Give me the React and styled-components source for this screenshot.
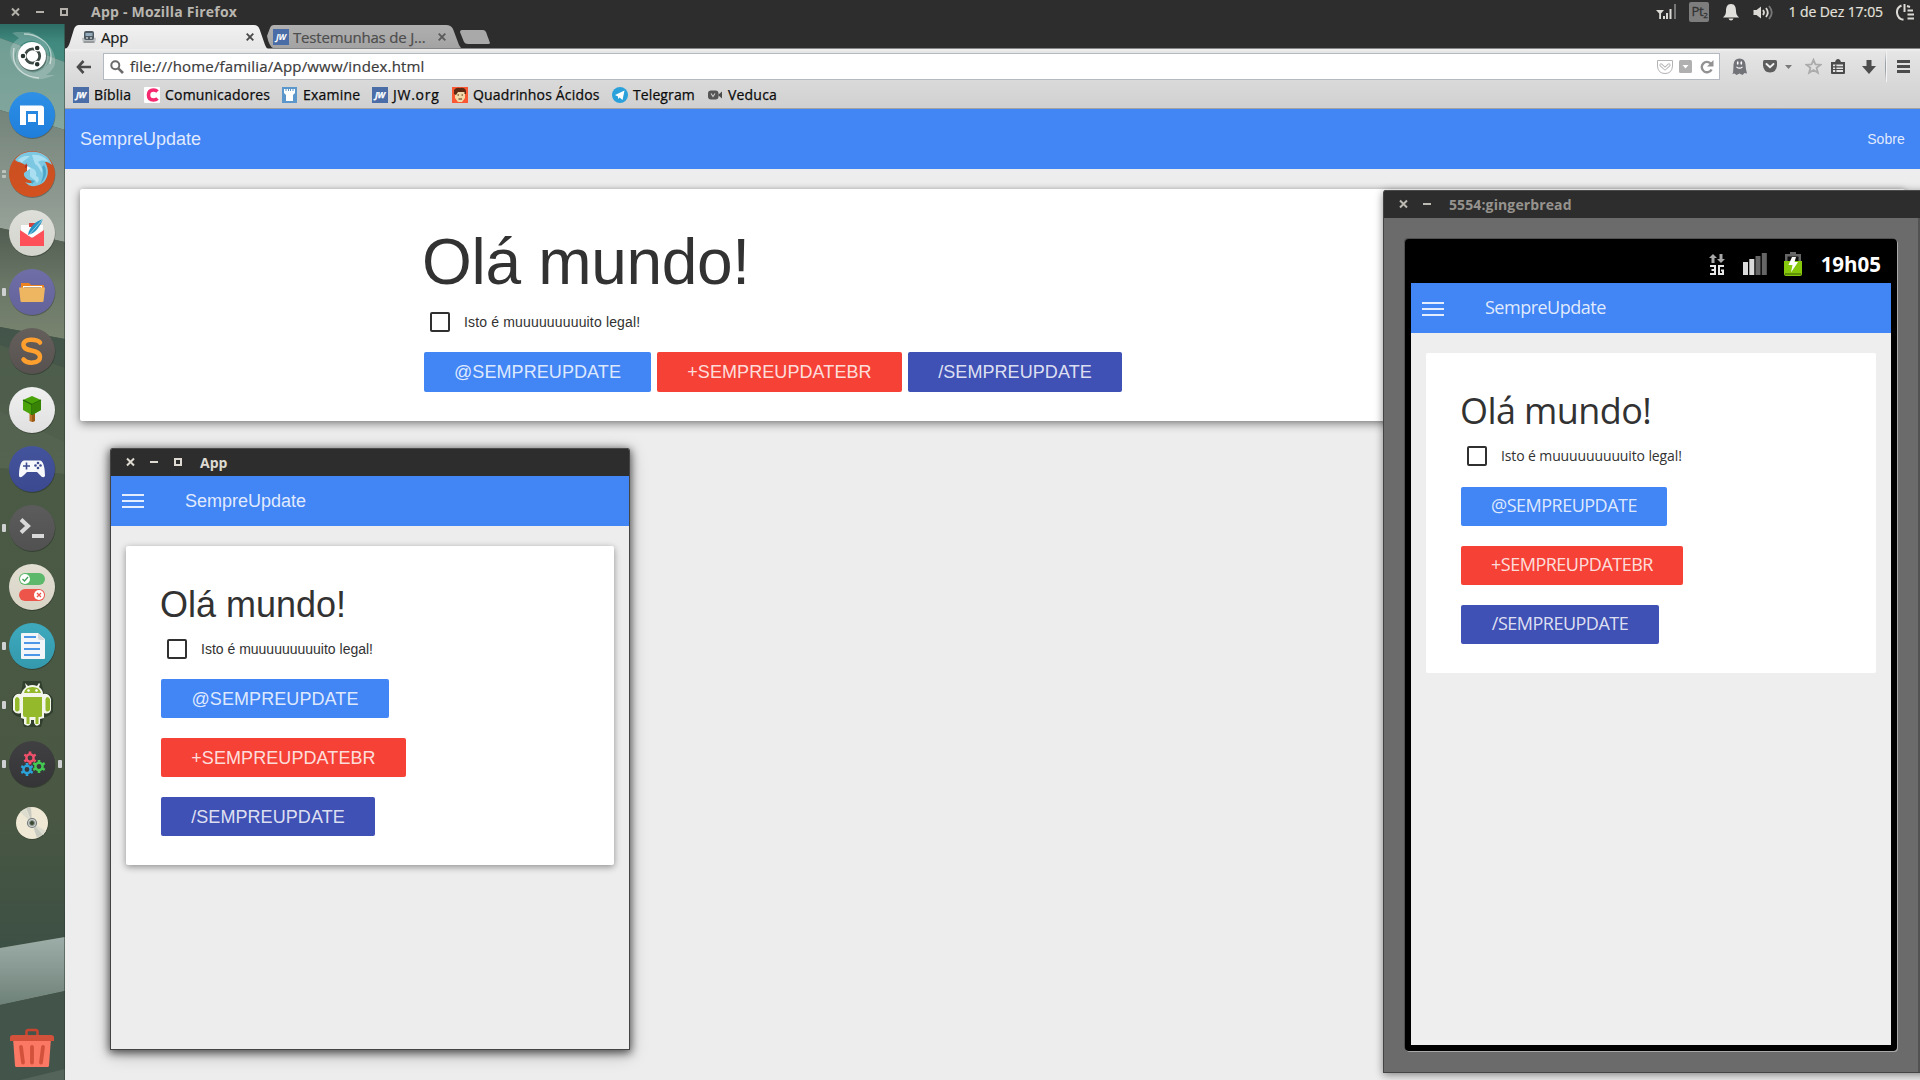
import React from "react";
import styled, { createGlobalStyle, css } from "styled-components";

const HELV = '"Liberation Sans", Arial, sans-serif';
const SYS = '"Open Sans", "Noto Sans", sans-serif';

const Global = createGlobalStyle`
  * { box-sizing: border-box; }
  html, body { margin: 0; width: 1920px; height: 1080px; overflow: hidden; background: #2d2d2d; }
  svg { display: block; flex: none; }
`;

/* ---------- desktop ---------- */
const Desktop = styled.div`
  position: relative;
  width: 1920px;
  height: 1080px;
  overflow: hidden;
  display: grid;
  grid-template: 24px 1fr / 65px 1fr;
  font-family: ${SYS};
  white-space: nowrap;
`;
const TopPanel = styled.header`
  grid-column: 1 / -1;
  display: flex;
  align-items: center;
  justify-content: space-between;
  padding: 0 6px 0 10px;
  background: #2d2d2d;
  color: #dfdbd2;
`;
const PanelGroup = styled.div`
  display: flex;
  align-items: center;
  height: 24px;
`;
const PanelTitle = styled.span`
  margin-left: 22px;
  font-weight: 700;
  font-size: 14px;
  line-height: 22px;
  letter-spacing: 0.22px;
  color: #b9b6b0;
`;
const Clock = styled.span`
  margin: 0 13px 0 14px;
  font-size: 14px;
  line-height: 22px;
  padding-bottom: 1px;
  letter-spacing: -0.08px;
  color: #e4e1dc;
  -webkit-text-stroke: 0.2px;
`;
const Gap = styled.i`
  width: ${(p) => p.$w}px;
`;
const Layout = styled.span`
  width: 20px;
  height: 20px;
  border-radius: 2px;
  background: #7d7d7d;
  color: #333;
  font-size: 13px;
  line-height: 19px;
  text-align: center;
  letter-spacing: -0.3px;
  -webkit-text-stroke: 0.3px;
  sub { font-size: 8px; line-height: 0; vertical-align: -2px; }
`;

/* ---------- dock ---------- */
const Dock = styled.nav`
  position: relative;
  display: flex;
  flex-direction: column;
  padding: 2px 0 11px;
  overflow: hidden;
  background: #4a5846;
`;
const Wallpaper = styled.svg`
  position: absolute;
  inset: 0;
`;
const DockItem = styled.div`
  position: relative;
  display: grid;
  grid-template-columns: 6px 1fr 7px;
  align-items: center;
  height: 59px;
  margin-top: ${(p) => (p.$last ? "auto" : 0)};
  ${(p) => p.$last && css`height: 42px;`}
  & > svg { justify-self: center; grid-column: 2; margin-left: -0.5px; }
`;
const Pip = styled.i`
  grid-row: 1;
  grid-column: ${(p) => (p.$right ? 3 : 1)};
  justify-self: ${(p) => (p.$right ? "start" : "end")};
  width: 4px;
  height: 8px;
  border-radius: 1px;
  background: ${(p) =>
    p.$double
      ? "linear-gradient(#bcc3be 0 3px, transparent 3px 5px, #bcc3be 5px 8px)"
      : "#cfd0d2"};
`;

/* ---------- browser ---------- */
const Browser = styled.main`
  display: flex;
  flex-direction: column;
  min-width: 0;
  background: #ededed;
`;
const TabStrip = styled.div`
  display: flex;
  height: 25px;
  padding-top: 1px;
  background: #2d2d2d;
  border-bottom: 1px solid #858585;
`;
const Tab = styled.div`
  display: flex;
  align-items: center;
  width: ${(p) => p.$w}px;
  height: ${(p) => (p.$active ? 24 : 23)}px;
  margin-left: ${(p) => (p.$active ? 0 : -3)}px;
  padding: 0 ${(p) => (p.$active ? 14 : 15)}px 0 ${(p) => (p.$active ? 17 : 8)}px;
  background: ${(p) => (p.$active ? "linear-gradient(#f1f1f1, #e6e6e6)" : "linear-gradient(#b0b0b0, #a3a3a3)")};
  clip-path: ${(p) =>
    p.$active
      ? "path('M0 24 C3 23 4 20 5 17 L9 4 Q10.500 0 14 0 H189 Q193 0 194.500 4 L199 17 C200 20 201 23 203 24 Z')"
      : "path('M2 11 L5 3 Q6 0 9 0 H181 Q186 0 188 4 L194 20 L196 23 H8 Q4 21 2 11 Z')"};
  z-index: ${(p) => (p.$active ? 2 : 1)};
`;
const TabLabel = styled.span`
  flex: 1;
  margin-left: ${(p) => (p.$muted ? 4 : 5)}px;
  font-size: 15px;
  line-height: 22px;
  letter-spacing: -0.18px;
  color: ${(p) => (p.$muted ? "#4d4d4d" : "#161616")};
  -webkit-text-stroke: 0.2px;
`;
const NewTab = styled.i`
  width: 31px;
  height: 14px;
  margin: 5px 0 0 -2px;
  background: #a9a9a9;
  clip-path: path("M3 0 H24 Q26 0 27 2 L31 13 Q31 14 29 14 H9 Q6 14 5 12 L1 2 Q1 0 3 0 Z");
`;
const Chrome = styled.div`
  height: 60px;
  border-bottom: 1px solid #a3a3a3;
  background: linear-gradient(#f0f0f0 0, #e5e5e5 3px, #dadada 30px, #d0d0d0 60px);
`;
const NavBar = styled.div`
  display: flex;
  align-items: center;
  height: 33px;
  padding: 4px 9px 2px 11px;
`;
const UrlBox = styled.div`
  display: flex;
  align-items: center;
  width: 1617px;
  height: 27px;
  margin-left: 12px;
  padding: 0 5px 0 6px;
  border: 1px solid #b4b9c1;
  background: #fff;
`;
const Url = styled.span`
  flex: 1;
  margin-left: 6px;
  padding-bottom: 2px;
  font-size: 15px;
  line-height: 24px;
  letter-spacing: 0.16px;
  color: #3b3b3b;
  -webkit-text-stroke: 0.2px;
`;
const Divider = styled.i`
  width: 1px;
  height: 31px;
  margin: 0 11px 0 9px;
  background: linear-gradient(transparent, #9aa0a8 40%, #9aa0a8 60%, transparent);
  box-shadow: 1px 0 #f3f3f3;
`;
const Bookmarks = styled.div`
  display: flex;
  height: 25px;
  padding-left: 8px;
`;
const Bookmark = styled.div`
  display: flex;
  align-items: center;
  gap: ${(p) => p.$gap ?? 5}px;
  width: ${(p) => p.$w}px;
  font-size: 14px;
  line-height: 24px;
  color: #0b0b0b;
  letter-spacing: ${(p) => p.$ls ?? 0.2}px;
  -webkit-text-stroke: 0.25px;
`;
const Jw = styled.span`
  flex: none;
  width: 16px;
  height: 16px;
  background: #4a6da7;
  color: #fff;
  font: italic 700 8.5px/16px ${SYS};
  text-align: center;
  letter-spacing: -0.2px;
`;

/* ---------- SempreUpdate page ---------- */
const AppBar = styled.div`
  flex: none;
  display: flex;
  align-items: center;
  justify-content: space-between;
  height: ${(p) => (p.$wide ? 60 : 50)}px;
  padding: ${(p) => (p.$wide ? "0 15px" : "0 0 0 11px")};
  background: #4285f5;
  color: rgba(255, 255, 255, 0.85);
  ${(p) => !p.$wide && css`justify-content: flex-start;`}
`;
const Brand = styled.span`
  font-size: 18px;
  line-height: 20px;
  padding-bottom: ${(p) => p.$lift ?? 0}px;
  letter-spacing: ${(p) => p.$ls ?? 0}px;
`;
const About = styled.span`
  font-size: 14px;
  line-height: 20px;
  letter-spacing: 0.1px;
`;
const Burger = styled.i`
  width: 22px;
  height: 14px;
  margin: ${(p) => p.$m};
  border-top: 2px solid #e3edfe;
  border-bottom: 2px solid #e3edfe;
  background: linear-gradient(transparent 4px, #e3edfe 4px 6px, transparent 6px);
`;
const Card = styled.section`
  display: flex;
  flex-direction: column;
  align-items: flex-start;
  height: ${(p) => p.$h}px;
  margin: ${(p) => p.$m};
  padding: ${(p) => p.$p};
  border-radius: 2px;
  background: #fff;
  color: #323232;
  box-shadow: ${(p) => p.$shadow ?? "none"};
`;
const Heading = styled.h1`
  margin: 0;
  font-size: ${(p) => (p.$big ? 64 : 36)}px;
  line-height: ${(p) => (p.$big ? 64 : 36)}px;
  font-weight: 400;
  letter-spacing: ${(p) => p.$ls ?? 0}px;
  text-indent: ${(p) => p.$shift ?? 0}px;
`;
const CheckRow = styled.label`
  display: flex;
  align-items: center;
  gap: 14px;
  height: 20px;
  margin: ${(p) => p.$mt}px 0 0 6px;
  font-size: 14px;
  line-height: 20px;
  letter-spacing: ${(p) => p.$ls ?? 0}px;
`;
const Box = styled.i`
  width: 20px;
  height: 20px;
  border: 2px solid #303030;
  border-radius: 2px;
`;
const Buttons = styled.div`
  display: flex;
  flex-direction: ${(p) => (p.$row ? "row" : "column")};
  align-items: flex-start;
  gap: ${(p) => (p.$row ? 6 : 20)}px;
  margin-top: ${(p) => p.$mt}px;
`;
const Button = styled.button`
  width: ${(p) => p.$w}px;
  height: ${(p) => p.$h}px;
  padding: 0;
  border: 0;
  border-radius: 2px;
  background: ${(p) => p.$bg};
  color: rgba(255, 255, 255, 0.84);
  font: inherit;
  font-size: 18px;
  letter-spacing: ${(p) => p.$ls}px;
  line-height: ${(p) => p.$lh}px;
  display: flex;
  justify-content: center;
  align-items: flex-start;
`;

/* ---------- floating windows ---------- */
const Window = styled.div`
  position: absolute;
  left: ${(p) => p.$x}px;
  top: ${(p) => p.$y}px;
  width: ${(p) => p.$w}px;
  height: ${(p) => p.$h}px;
  display: flex;
  flex-direction: column;
  border: 1px solid #444;
  border-top: 0;
  border-radius: 3px 3px 0 0;
  background: ${(p) => p.$bg};
  box-shadow: ${(p) => p.$shadow};
  font-family: ${(p) => p.$font};
  overflow: hidden;
`;
const TitleBar = styled.div`
  flex: none;
  display: flex;
  align-items: center;
  height: 28px;
  padding: 0 0 2px 14px;
  border-top: 1px solid #4b4b4b;
  background: #2d2d2d;
  font: 700 14px/22px ${SYS};
  color: ${(p) => p.$color};
  letter-spacing: ${(p) => p.$ls ?? 0}px;
`;
const WinLabel = styled.span`
  margin: 2px 0 0 17px;
`;
const Phone = styled.div`
  display: flex;
  flex-direction: column;
  width: 492px;
  height: 812px;
  margin: 21px 0 0 21px;
  padding: 0 6px 6px 6px;
  border-radius: 4px;
  background: #000;
  box-shadow: 1px 1px 0 #a9a9a9, -1px -1px 0 #505050;
`;
const StatusBar = styled.div`
  flex: none;
  display: flex;
  align-items: center;
  justify-content: flex-end;
  height: 44px;
  padding: 6px 10px 0 0;
`;
const PhoneClock = styled.span`
  margin-left: 19px;
  font-size: 20.5px;
  line-height: 24px;
  font-weight: 700;
  color: #fff;
`;
const PhonePage = styled.div`
  flex: 1;
  background: #eee;
`;

/* ---------- small drawings ---------- */
const WinButtons = ({ color, max = true, top }) => {
  const w = max ? (top ? 59 : 58) : 34;
  return (
    <svg width={w} height="10" viewBox={`0 0 ${w} 10`} fill="none" stroke={color} strokeWidth="2">
      <path d="M2 1.500 L9 8.500 M9 1.500 L2 8.500" />
      <path d={top ? "M26 5 H34" : "M25 5 H33"} />
      {max && <rect x={top ? 51 : 50} y="2" width="6" height="6" />}
    </svg>
  );
};

const TrayIcons = () => (
  <>
    <svg width="21" height="17" viewBox="0 0 21 17" fill="#dcdad5">
      <path d="M0 6 H8 L5 9.500 V15 H3.200 V9.500 Z M7 12 H9 V15 H7 Z M10 9 H12 V15 H10 Z M13.500 5 H15.500 V15 H13.500 Z" />
      <path d="M18 0 H20 V15 H18 Z" fill="#777" />
    </svg>
    <Gap $w={12} />
    <Layout>Pt<sub>2</sub></Layout>
    <Gap $w={14} />
    <svg width="16" height="17" viewBox="0 0 16 17" fill="#e2e0dc">
      <path d="M8 0 C4 0 3 3.500 3 7 C3 10 2 11.500 0 13.500 H16 C14 11.500 13 10 13 7 C13 3.500 12 0 8 0 Z M5.500 14.500 H10.500 Q10 16.500 8 16.500 Q6 16.500 5.500 14.500 Z" />
    </svg>
    <Gap $w={14} />
    <svg width="21" height="15" viewBox="0 0 21 15" fill="none" stroke="#dcdad5" strokeWidth="1.800">
      <path d="M0.500 5 H3.500 L8 1.500 V13.500 L3.500 10 H0.500 Z" fill="#dcdad5" stroke="none" />
      <path d="M10 5 Q12 7.500 10 10 M13 3 Q16.500 7.500 13 12" />
      <path d="M16 1 Q21.500 7.500 16 14" stroke="#777" />
    </svg>
  </>
);

const Power = () => (
  <svg width="18" height="17" viewBox="0 0 18 17" fill="none" stroke="#dcdad5" strokeWidth="2">
    <path d="M5.500 1.500 A7.500 7.500 0 0 0 7.500 15.800 M8.500 0 V8 M11 2 L14 3 M11.500 6.500 H17 M11.500 10.500 H18 M11.500 14.500 H18" />
  </svg>
);

const Close = ({ color }) => (
  <svg width="8" height="8" viewBox="0 0 8 8" stroke={color} strokeWidth="1.900"><path d="M0.700 0.700 L7.300 7.300 M7.300 0.700 L0.700 7.300" /></svg>
);

const Circle = ({ id, from, to, children }) => (
  <svg width="48" height="48" viewBox="-1 -1 48 48">
    <defs><linearGradient id={id} x2="0" y2="1"><stop stopColor={from} /><stop offset="1" stopColor={to} /></linearGradient></defs>
    <circle cx="23.400" cy="24" r="23" fill="#000" opacity=".28" />
    <circle cx="23" cy="23" r="23" fill={`url(#${id})`} />
    {children}
  </svg>
);

const Gear = ({ x, y, c }) => (
  <g transform={`translate(${x} ${y})`} stroke={c} fill="none">
    <circle r="3.600" strokeWidth="2.400" />
    <path strokeWidth="2.600" d="M0 -4 V-6.500 M0 4 V6.500 M3.500 -2 L5.700 -3.300 M-3.500 2 L-5.700 3.300 M-3.500 -2 L-5.700 -3.300 M3.500 2 L5.700 3.300" />
  </g>
);

const DOCK = [
  { k: "ubuntu", icon: (
    <svg width="48" height="48" viewBox="-1 -1 48 48">
      <g fill="#fff" opacity=".2">
        <path d="M3 0 Q24 -6 36 10 Q46 24 31 42 Q43 24 32 12 Q20 2 8 16 Q3 24 7 34 Q-1 24 2 14 Q5 8 10 5 Z" />
        <path d="M46 42 Q24 52 11 38 Q1 24 14 5 Q5 24 15 35 Q26 46 39 31 Q44 24 40 12 Q49 24 45 34 Q42 39 37 42 Z" />
      </g>
      <path d="M5 15 Q2 32 14 40 Q20 44 30 45 M41 31 Q45 14 32 6 Q25 1 15 1" fill="none" stroke="#fff" strokeWidth="1.400" opacity=".55" />
      <circle cx="23.500" cy="24" r="14.500" fill="#000" opacity=".3" />
      <circle cx="23" cy="23" r="14" fill="#fff" />
      <circle cx="23.500" cy="23" r="7.200" fill="none" stroke="#3d4a45" strokeWidth="2.800" />
      <g fill="#26332e" stroke="#fff" strokeWidth="1.200"><circle cx="14" cy="23" r="2.900" /><circle cx="28.200" cy="15" r="2.900" /><circle cx="28.200" cy="31.200" r="2.900" /></g>
    </svg>) },
  { k: "maxthon", icon: (
    <Circle id="mx" from="#2f90e6" to="#1e7edb">
      <path d="M11 33 V13.500 H32 Q35 13.500 35 16.500 V33 H29 V19 H17 V33 Z M19 22 H27 V30 H19 Z" fill="#fff" />
    </Circle>) },
  { k: "firefox", pip: "double", icon: (
    <Circle id="ff" from="#c94f22" to="#d2511f">
      <path d="M6 9 C12 1 20 0 27 1 C35 2 41 7 43 14 C39 11 38 11 36 11 C40 18 40 25 35 31 C29 36 21 37 16 31 C20 33 24 32 25 30 C19 30 14 26 15 22 L19 19 L18 14 C14 14 13 11 9 11 Z" fill="#7cc8e2" />
      <path d="M9 9 C14 4 18 5 21 5 C18 8 15 9 13 12 Z M23 4 C30 3 36 6 40 11 C35 9 32 9 29 11 C32 14 34 18 33 22 C30 18 30 15 26 13 Z M21 17 C26 17 28 21 27 25 C30 26 31 29 28 32 C26 28 23 28 21 25 Z" fill="#a9dff0" />
      <path d="M35 14 C39 20 37 28 31 33 C35 26 35 20 33 16 Z M22 29 L26 30 L23 33 Z" fill="#4ba5c8" />
      <path d="M17 12 L19 16 L16 17 Z" fill="#b22d20" /><path d="M18 15 L22 17 L18 20 Z" fill="#eef8fb" />
    </Circle>) },
  { k: "mail", icon: (
    <Circle id="ml" from="#dedfd9" to="#d3d4cc">
      <path d="M12 15 H34 V27 H12 Z" fill="#fbfbfb" /><path d="M20 13 H26 V17 H20 Z" fill="#d7433f" />
      <path d="M11 20 L23 28 L35 20 V36 H11 Z" fill="#fd5059" />
      <path d="M34 9 C27 11 20 17 19 25 C27 23 31 16 34 9 Z" fill="#2595c5" /><path d="M34 9 L19 26" stroke="#eee" strokeWidth=".6" />
    </Circle>) },
  { k: "files", pip: "one", icon: (
    <Circle id="fl" from="#706ea6" to="#64629a">
      <path d="M12 14 H20 L22 16 H35 V22 H12 Z" fill="#ea821f" /><path d="M14 17 H33 V22 H14 Z" fill="#fff" /><path d="M15 18.500 H32" stroke="#999" />
      <path d="M10 18.500 H36 L34.500 32 Q34.500 33 33.500 33 H12.500 Q11.500 33 11.500 32 Z" fill="#efb662" />
    </Circle>) },
  { k: "sublime", icon: (
    <Circle id="sb" from="#655f5c" to="#575250">
      <path d="M31 14.500 C28 11 14 10 14.500 17 C15 25 31 20 31 29 C31 36 18 36 14.500 31.500" fill="none" stroke="#ff9f2e" strokeWidth="4.500" strokeLinecap="round" />
    </Circle>) },
  { k: "tree", icon: (
    <Circle id="tr" from="#f0f0f0" to="#e0e0e0">
      <path d="M20.500 26 H26 V34 L23 35 L20.500 34 Z" fill="#b9752a" /><path d="M23 26 H26 V34 L23 35 Z" fill="#9a5a15" />
      <path d="M23 9 L32 13 V23 L23 28 L14 23 V13 Z" fill="#4aa409" /><path d="M14 13 L23 17.500 L32 13 M23 17.500 V28" stroke="#23610a" strokeWidth="1.300" fill="none" /><path d="M23 17.500 L32 13 V23 L23 28 Z" fill="#388205" />
    </Circle>) },
  { k: "gamepad", icon: (
    <Circle id="gp" from="#44549c" to="#3b4990">
      <path d="M15 14.500 H31 C35 15 36 24 36 30 Q34 33 31 29 L28 26 H18 L15 29 Q11 33 10 30 C10 24 11 15 15 14.500 Z" fill="#f7f8fb" />
      <path d="M17.500 16.500 V23.500 M14 20 H21" stroke="#3c4a90" strokeWidth="1.600" />
      <g fill="#3c4a90"><circle cx="29" cy="17" r="1.300" /><circle cx="29" cy="22" r="1.300" /><circle cx="26.500" cy="19.500" r="1.300" /><circle cx="31.500" cy="19.500" r="1.300" /></g>
    </Circle>) },
  { k: "terminal", pip: "one", icon: (
    <Circle id="tm" from="#5c5c5c" to="#515151">
      <path d="M12 14.500 L19 21 L12 27.500" fill="none" stroke="#d9d9d9" strokeWidth="4" /><path d="M23 31 H35" stroke="#d9d9d9" strokeWidth="4" />
    </Circle>) },
  { k: "tweak", icon: (
    <Circle id="tw" from="#e2dfd2" to="#d8d5c7">
      <rect x="10" y="9" width="26" height="12" rx="6" fill="#5cb86a" /><circle cx="16" cy="15" r="5" fill="#fff" /><path d="M13.500 15 L15.500 17 L19 13" stroke="#3f9f58" strokeWidth="1.300" fill="none" />
      <rect x="10" y="25" width="26" height="12" rx="6" fill="#ee554a" /><circle cx="30" cy="31" r="5" fill="#fff" /><path d="M28 29 L32 33 M32 29 L28 33" stroke="#ee554a" strokeWidth="1.300" />
    </Circle>) },
  { k: "writer", pip: "one", icon: (
    <Circle id="wr" from="#3ea9bd" to="#3499ad">
      <path d="M12 11 Q12 10 13 10 H29 L36 16 V35 Q36 36 35 36 H13 Q12 36 12 35 Z" fill="#f3f6f9" /><path d="M29 10 L36 17 H31 Q29 17 29 15 Z" fill="#d4d8dc" />
      <path d="M15 14 H27 M15 20 H31 M15 26 H31 M15 32 H31" stroke="#4b96e6" strokeWidth="2" />
    </Circle>) },
  { k: "android", pip: "one", icon: (
    <svg width="48" height="48" viewBox="-1 -1 48 48">
      <path d="M14 -1 L32 -1 L35 11 Q42 11 44 17 V30 Q40 35 35 35 L32 45 H15 L12 35 Q6 35 3 30 V17 Q4 11 12 11 Z" fill="#22301f" opacity=".6" />
      <path d="M16 1 L19 4 Q23 2 28 4 L30 1 L31 2 L30 5 Q34 8 34 12 Q40 11 42 17 V28 Q40 33 35 31 V36 L31 37 V42 Q27 46 25 41 V38 H22 V41 Q20 46 15 42 V37 L12 36 V31 Q7 33 4 28 V17 Q6 11 12 12 Q13 8 17 5 Z" fill="#f4f6ec" />
      <path d="M15 11 Q16 5 23.500 5 Q31 5 32 11 Z M14 15 H33 V34 Q33 35 31 35 H29.500 V42 H26.500 V35 H20.500 V42 H17.500 V35 H16 Q14 35 14 33 Z M6 17 Q8 13 10.500 17 V28 Q8 31 6 28 Z M36.500 17 Q38 13 41 17 V28 Q38 31 36.500 28 Z" fill="#94b92b" />
      <circle cx="19.500" cy="8.500" r="1.300" fill="#fff" /><circle cx="27.500" cy="8.500" r="1.300" fill="#fff" />
    </svg>) },
  { k: "gears", pip: "both", icon: (
    <Circle id="gr" from="#403f41" to="#353436">
      <Gear x={21} y={17} c="#f0506b" /><Gear x={30} y={25.500} c="#43cb53" /><Gear x={18} y={28.500} c="#2ba2d8" />
    </Circle>) },
  { k: "disc", icon: (
    <svg width="48" height="48" viewBox="-1 -1 48 48">
      <circle cx="23.300" cy="23.500" r="16.300" fill="#000" opacity=".2" /><circle cx="23" cy="23" r="16" fill="#efe8d5" />
      <path d="M23 23 L17 8 L22 7 Z M23 23 L28 38 L35 34 Z" fill="#c9cbc1" /><path d="M23 23 L11 12 L16.500 8.500 Z M23 23 L37 31 L34 35 Z" fill="#dcdccf" />
      <circle cx="23" cy="23" r="4.500" fill="#cfd2cb" stroke="#737d80" strokeWidth="1.200" /><circle cx="23" cy="23" r="2.500" fill="#394632" stroke="#8d9590" />
    </svg>) },
];

const Trash = () => (
  <svg width="44" height="40" viewBox="0 0 44 40">
    <path d="M16.500 8 V4 Q16.500 2 18.500 2 H25.500 Q27.500 2 27.500 4 V8" fill="none" stroke="#c9452f" strokeWidth="2.500" />
    <path d="M3 10 H41 L39 37.500 Q39 39 37.500 39 H6.500 Q5 39 5 37.500 Z" fill="#fb7865" />
    <path d="M0 9.500 Q0 7 3 7 H41 Q44 7 44 9.500 V13 H0 Z" fill="#d2513b" />
    <path d="M11 19 L13 34.500 M22 19 V34.500 M33 19 L31 34.500" stroke="#d2513b" strokeWidth="3.800" strokeLinecap="round" />
  </svg>
);

const Paper = () => (
  <Wallpaper width="65" height="1056" viewBox="0 24 65 1056">
    <defs>
      <linearGradient id="w1" x2="0" y2="1"><stop stopColor="#2d6e66" /><stop offset=".5" stopColor="#418a7f" /><stop offset="1" stopColor="#468c80" /></linearGradient>
      <linearGradient id="w2" x2="0" y2="1"><stop stopColor="#6f9d93" /><stop offset="1" stopColor="#85a79e" /></linearGradient>
      <linearGradient id="w3" x2="0" y2="1"><stop stopColor="#74847a" /><stop offset="1" stopColor="#9aa49b" /></linearGradient>
      <linearGradient id="w4" x2="0" y2="1"><stop stopColor="#505d50" /><stop offset=".5" stopColor="#6a7767" /><stop offset="1" stopColor="#78846f" /></linearGradient>
      <linearGradient id="w5" x2="0" y2="1"><stop stopColor="#43544a" /><stop offset="1" stopColor="#4d5d48" /></linearGradient>
      <linearGradient id="w6" x2="0" y2="1"><stop stopColor="#9daea8" /><stop offset="1" stopColor="#6e8178" /></linearGradient>
      <linearGradient id="w7" x2="0" y2="1"><stop stopColor="#4a5a45" /><stop offset=".7" stopColor="#4a5843" /><stop offset="1" stopColor="#3d5044" /></linearGradient>
    </defs>
    <path d="M0 24 H65 V62 L0 38 Z" fill="url(#w1)" />
    <path d="M0 38 L65 62 V130 L0 110 Z" fill="url(#w2)" />
    <path d="M0 110 L65 130 V242 L0 228 Z" fill="url(#w3)" />
    <path d="M0 228 L65 242 V339 L0 327 Z" fill="url(#w4)" />
    <path d="M0 327 L65 339 V480 H0 Z" fill="url(#w5)" />
    <path d="M0 345 L65 368 V442 L0 411 Z" fill="#55654f" opacity=".55" />
    <path d="M0 411 L65 442 V474 L0 468 Z" fill="#5a6955" opacity=".6" />
    <path d="M0 468 L65 474 V937 L0 948 Z" fill="url(#w7)" />
    <path d="M0 948 L65 937 V991 L0 1005 Z" fill="url(#w6)" />
    <path d="M0 1005 L65 991 V1080 H0 Z" fill="#43544a" />
    <path d="M20 1080 L65 1069 V1080 Z" fill="#54645a" />
    <path d="M64.500 24 V1080" stroke="#2e3a33" opacity=".5" />
  </Wallpaper>
);

const Star = () => (
  <svg width="17" height="17" viewBox="0 0 17 17" fill="none" stroke="#ababab" strokeWidth="1.800">
    <path d="M8.500 1.800 L10.400 6.400 L15.500 6.700 L11.600 9.900 L12.900 14.800 L8.500 12.100 L4.100 14.800 L5.400 9.900 L1.500 6.700 L6.600 6.400 Z" />
  </svg>
);

const LINKS = [
  { label: "@SEMPREUPDATE", bg: "#4285f5" },
  { label: "+SEMPREUPDATEBR", bg: "#f64236" },
  { label: "/SEMPREUPDATE", bg: "#3f51b5" },
];
const SocialButtons = ({ widths, h, lh = h, ls = 0.08, ...rest }) => (
  <Buttons {...rest}>
    {LINKS.map((l, i) => <Button key={l.label} $bg={l.bg} $w={widths[i]} $h={h} $lh={lh} $ls={ls}>{l.label}</Button>)}
  </Buttons>
);

export default function App() {
  return (
    <Desktop>
      <Global />
      <TopPanel>
        <PanelGroup>
          <WinButtons color="#b4b1ab" top />
          <PanelTitle>App - Mozilla Firefox</PanelTitle>
        </PanelGroup>
        <PanelGroup>
          <TrayIcons />
          <Clock>1 de Dez 17:05</Clock>
          <Power />
        </PanelGroup>
      </TopPanel>

      <Dock>
        <Paper />
        {DOCK.map((d) => (
          <DockItem key={d.k}>
            {d.pip && <Pip $double={d.pip === "double"} />}
            {d.icon}
            {d.pip === "both" && <Pip $right />}
          </DockItem>
        ))}
        <DockItem $last><Trash /></DockItem>
      </Dock>

      <Browser>
        <TabStrip>
          <Tab $active $w={203}>
            <svg width="14" height="14" viewBox="0 0 14 14">
              <path d="M0 8 Q7 6 14 8 L13 13 H1 Z" fill="#b9bec1" />
              <rect x="2" y="1" width="10" height="9" rx="2" fill="#4e5a62" /><rect x="3.500" y="3" width="7" height="3" fill="#93abba" /><path d="M4 8 H6 M8 8 H10" stroke="#fff" /><path d="M2 12 H12" stroke="#777" />
            </svg>
            <TabLabel>App</TabLabel>
            <Close color="#4a4a4a" />
          </Tab>
          <Tab $w={196}>
            <Jw>JW</Jw>
            <TabLabel $muted>Testemunhas de J…</TabLabel>
            <Close color="#5b5b5b" />
          </Tab>
          <NewTab />
        </TabStrip>
        <Chrome>
          <NavBar>
            <svg width="15" height="14" viewBox="0 0 15 14" fill="none" stroke="#4b4b4b" strokeWidth="2.600"><path d="M7.500 1 L2 7 L7.500 13 M2 7 H15" /></svg>
            <UrlBox>
              <svg width="14" height="14" viewBox="0 0 14 14" fill="none" stroke="#6b6b6b" strokeWidth="2"><circle cx="5.300" cy="5.300" r="4" /><path d="M8.300 8.300 L13 13" strokeWidth="2.600" /></svg>
              <Url>file:///home/familia/App/www/index.html</Url>
              <svg width="16" height="14" viewBox="0 0 16 14" fill="none" stroke="#b3b3b3"><path d="M0.500 0.500 H15.500 V6 Q15 13.500 8 13.500 Q1 13.500 0.500 6 Z" /><path d="M4 5 L8 8.700 L12 5" strokeWidth="3.200" strokeLinecap="round" strokeLinejoin="round" /><path d="M4 5 L8 8.700 L12 5" stroke="#fff" strokeWidth="1.400" strokeLinecap="round" /></svg>
              <Gap $w={6} />
              <svg width="13" height="13" viewBox="0 0 13 13"><rect width="13" height="13" rx="1.500" fill="#b0b0b0" /><path d="M3.500 5 H9.500 L6.500 8.500 Z" fill="#fff" /></svg>
              <Gap $w={8} />
              <svg width="14" height="14" viewBox="0 0 14 14" fill="none" stroke="#929292" strokeWidth="2.400"><path d="M11 3.800 A5.200 5.200 0 1 0 11.600 9.500" /><path d="M13.500 0 V6.500 H7 Z" fill="#929292" stroke="none" /></svg>
            </UrlBox>
            <Gap $w={12} />
            <svg width="15" height="17" viewBox="0 0 15 17"><path d="M1 15 Q1.500 10 1.500 6.500 Q2 0.500 7.500 0.500 Q13 0.500 13.500 6.500 Q13.500 10 15 15.500 L12.500 15 L10.500 17 L7.500 15.500 L4.500 17 L2.500 15.500 L0 16 Z" fill="#727279" /><ellipse cx="5.700" cy="5" rx=".9" ry="1.700" fill="#fff" /><ellipse cx="9.300" cy="5" rx=".9" ry="1.700" fill="#fff" /><path d="M4.500 8.800 Q7.500 11.500 10.500 8.800" stroke="#fff" strokeWidth="1.100" fill="none" /></svg>
            <Gap $w={16} />
            <svg width="14" height="13" viewBox="0 0 14 13"><path d="M0 1.500 Q0 0 1.500 0 H12.500 Q14 0 14 1.500 V5.500 Q13.500 12 7 12.500 Q0.500 12 0 5.500 Z" fill="#5d5d5d" /><path d="M3.500 4 L7 7.300 L10.500 4" stroke="#f2f2f2" strokeWidth="1.900" fill="none" strokeLinecap="round" /></svg>
            <Gap $w={8} />
            <svg width="7" height="4" viewBox="0 0 7 4"><path d="M0 0 H7 L3.500 4 Z" fill="#7a7a7a" /></svg>
            <Gap $w={13} />
            <Star />
            <Gap $w={9} />
            <svg width="14" height="15" viewBox="0 0 14 15">
              <path d="M0 3 H4 L5 1 Q7 -0.800 9 1 L10 3 H14 V14 Q14 15 13 15 H1 Q0 15 0 14 Z" fill="#4b4b4b" />
              <path d="M2 5.500 H12 V13 H2 Z" fill="#e3e3e3" />
              <path d="M2 7.800 H12 M2 10.500 H12 M4.800 5.500 V13" stroke="#4b4b4b" strokeWidth="1.200" />
            </svg>
            <Gap $w={17} />
            <svg width="14" height="14" viewBox="0 0 14 14"><path d="M4.500 0 H9.500 V6 H14 L7 14 L0 6 H4.500 Z" fill="#4d4d4d" /></svg>
            <Divider />
            <svg width="13" height="13" viewBox="0 0 13 13" stroke="#4b4b4b" strokeWidth="2.800"><path d="M0 1.500 H13 M0 6.500 H13 M0 11.500 H13" /></svg>
          </NavBar>
          <Bookmarks>
            <Bookmark $w={71}><Jw>JW</Jw>Bíblia</Bookmark>
            <Bookmark $w={138}>
              <svg width="16" height="16" viewBox="0 0 16 16"><rect width="16" height="16" rx="1" fill="#fff" /><path d="M13.500 4.500 Q12 3 9.500 3 Q4.500 3 4.500 8 Q4.500 13 9.500 13 Q12 13 13.500 11.500" fill="none" stroke="#f6286f" strokeWidth="3.600" /></svg>
              Comunicadores
            </Bookmark>
            <Bookmark $w={90} $gap={6}>
              <svg width="15" height="16" viewBox="0 0 15 16"><rect width="15" height="16" fill="#5b97cb" /><path d="M2 2 H3.500 V4 H4.500 V2 H6 V4 H7 V2 H8 V4 H9 V2 H10.500 V4 H11.500 V2 H13 V6 L11 8 V14 H4 V8 L2 6 Z" fill="#fff" /></svg>
              Examine
            </Bookmark>
            <Bookmark $w={80} $ls={0.75}><Jw>JW</Jw>JW.org</Bookmark>
            <Bookmark $w={160} $ls={0.17}>
              <svg width="16" height="16" viewBox="0 0 16 16"><rect width="16" height="16" fill="#fb5732" /><path d="M3 5 H13 V11 L10 15 H6 L3 11 Z" fill="#f3d9a8" /><path d="M2 7 V3 Q4 0 8 1 Q13 0 14 4 V7 H12.500 V5 H6 L4 8 Z" fill="#5c2a13" /><path d="M5.500 8 H7 M9.500 8 H11 M6.500 12 H10" stroke="#4a2c17" /></svg>
              Quadrinhos Ácidos
            </Bookmark>
            <Bookmark $w={96} $ls={0.1}>
              <svg width="16" height="16" viewBox="0 0 16 16"><circle cx="8" cy="8" r="8" fill="#2ba1dc" /><path d="M3 8 L12.500 3.500 L10.500 13 L7.500 10.500 L6 12 V9.500 Z" fill="#fff" /></svg>
              Telegram
            </Bookmark>
            <Bookmark $w={80}>
              <svg width="15" height="12" viewBox="0 0 15 12"><rect y="1.500" width="10.500" height="9" rx="3" fill="#555" /><path d="M10 6 L14 2.500 V9.500 Z" fill="#4b4b4b" /><path d="M3 4.500 L5 7.500 L7 4.500" stroke="#ccc" strokeWidth="1.100" fill="none" /></svg>
              Veduca
            </Bookmark>
          </Bookmarks>
        </Chrome>
        <WidePage>
          <AppBar $wide><Brand>SempreUpdate</Brand><About>Sobre</About></AppBar>
          <Card $h={232} $m="20px 15px 0" $p="41px 0 0 344px" $shadow="0 3px 10px rgba(0,0,0,.42), 0 0 5px rgba(0,0,0,.14)">
            <Heading $big $shift={-2} $ls={-0.3}>Olá mundo!</Heading>
            <CheckRow $mt={18} $ls={0.16}><Box />Isto é muuuuuuuuuito legal!</CheckRow>
            <SocialButtons $row $mt={20} h={40} widths={[227, 245, 214]} />
          </Card>
        </WidePage>
      </Browser>

      <Window $x={110} $y={448} $w={520} $h={602} $bg="#ededed" $font={HELV} $shadow="0 2px 8px 1px rgba(0,0,0,.6), 0 4px 18px rgba(0,0,0,.25)">
        <TitleBar $color="#dfdbd2"><WinButtons color="#dfdbd2" /><WinLabel>App</WinLabel></TitleBar>
        <AppBar><Burger $m="0 41px 0 0" /><Brand>SempreUpdate</Brand></AppBar>
        <Card $h={319} $m="20px 15px 0" $p="41px 0 0 35px" $shadow="0 2px 7px rgba(0,0,0,.4)">
          <Heading $shift={-1}>Olá mundo!</Heading>
          <CheckRow $mt={16}><Box />Isto é muuuuuuuuuito legal!</CheckRow>
          <SocialButtons $mt={20} h={39} lh={40} widths={[228, 245, 214]} />
        </Card>
      </Window>

      <Window $x={1383} $y={190} $w={560} $h={883} $bg="linear-gradient(90deg, #6b6b6b 534px, #525252 534px)" $font={SYS} $shadow="0 2px 8px rgba(0,0,0,.45)">
        <TitleBar $color="#96938e" $ls={0.12}><WinButtons color="#bdbab4" max={false} /><WinLabel>5554:gingerbread</WinLabel></TitleBar>
        <Phone>
          <StatusBar>
            <svg width="16" height="21" viewBox="0 0 16 21">
              <path d="M4 0 L8 4 H5.500 V9 H2.500 V4 H0 Z M10.500 0 H13.500 V5 H16 L12 9 L8 5 H10.500 Z" fill="#a8a8a8" />
              <path d="M1 12 H6 V20 H1 M2.500 16 H6 M15 12 H10 V20 H14 V16.500 H12" fill="none" stroke="#e6e6e6" strokeWidth="2" />
            </svg>
            <Gap $w={18} />
            <svg width="24" height="22" viewBox="0 0 24 22"><path d="M0 9 H5 V22 H0 Z M6.300 6 H11.300 V22 H6.300 Z" fill="#dadada" /><path d="M12.500 3 H17.500 V22 H12.500 Z M18.800 0 H23.800 V22 H18.800 Z" fill="#666" /></svg>
            <Gap $w={17} />
            <svg width="18" height="24" viewBox="0 0 18 24"><path d="M6 0 H12 V2 H17 V10 H1 V2 H6 Z" fill="#666" /><path d="M3.500 4.500 H14.500 V10 H3.500 Z" fill="#111" /><path d="M0 9 H18 V22 Q18 24 16 24 H2 Q0 24 0 22 Z" fill="#86c80b" /><path d="M1 21 H17 V23 H1 Z" fill="#5f9107" /><path d="M8 5 H12 L10.500 10 H14 L7 20.500 L8.500 13 H4.500 Z" fill="#fff" /></svg>
            <PhoneClock>19h05</PhoneClock>
          </StatusBar>
          <PhonePage>
            <AppBar><Burger $m="1px 41px 0 0" /><Brand $lift={3} $ls={-0.5}>SempreUpdate</Brand></AppBar>
            <Card $h={320} $m="20px 15px 0" $p="40px 0 0 35px">
              <Heading $shift={-1} $ls={-0.6}>Olá mundo!</Heading>
              <CheckRow $mt={17} $ls={-0.12}><Box />Isto é muuuuuuuuuito legal!</CheckRow>
              <SocialButtons $mt={21} h={39} lh={37} ls={-0.5} widths={[206, 222, 198]} />
            </Card>
          </PhonePage>
        </Phone>
      </Window>
    </Desktop>
  );
}

const WidePage = styled.div`
  flex: 1;
  font-family: ${HELV};
`;
